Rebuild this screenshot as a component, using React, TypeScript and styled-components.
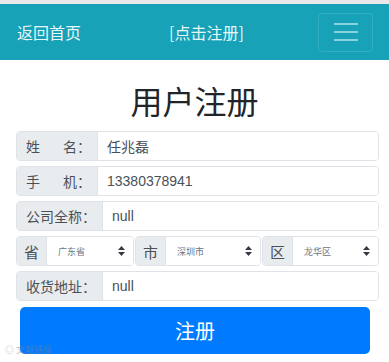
import styled, { createGlobalStyle } from "styled-components";

const GlobalStyle = createGlobalStyle`
  * { box-sizing: border-box; }
  body {
    margin: 0;
    background: #fff;
    font-family: "Liberation Sans", "Noto Sans CJK SC", sans-serif;
    color: #212529;
  }
`;

const Page = styled.div`
  position: relative;
  width: 389px;
  height: 362px;
  overflow: hidden;
`;

const StatusStrip = styled.div`
  height: 4px;
  background: #e9e9e9;
`;

const Navbar = styled.nav`
  height: 56px;
  background: #17a2b8;
  display: flex;
  align-items: center;
  padding: 0 16px 0 17px;
  font-size: 16px;
  font-family: "Noto Sans CJK SC", sans-serif;
  color: rgba(255, 255, 255, 0.92);
`;

const Brand = styled.a`
  color: inherit;
  text-decoration: none;
`;

const Hint = styled.span`
  margin-left: 88px;
  color: inherit;
`;

const Toggler = styled.button`
  margin-left: auto;
  width: 55px;
  height: 39px;
  border: 1px solid rgba(255, 255, 255, 0.12);
  border-radius: 4px;
  background: transparent;
  display: flex;
  align-items: center;
  justify-content: center;
  padding: 0;
`;

const Title = styled.h2`
  margin: 24px 0 9px;
  text-align: center;
  font-size: 32px;
  line-height: 38px;
  font-weight: 400;
  color: #212529;
`;

const Form = styled.form`
  padding: 0 10px 0 16px;
  display: flex;
  flex-direction: column;
  gap: 5px;
`;

const Group = styled.div<{ $grow?: number }>`
  display: flex;
  height: 30px;
  border: 1px solid #dfe2e6;
  border-radius: 4px;
  overflow: hidden;
  ${(p) => (p.$grow ? `flex: ${p.$grow} 1 0; min-width: 0;` : "")}
`;

const Addon = styled.span<{ $narrow?: boolean }>`
  display: flex;
  align-items: center;
  background: #e9ecef;
  color: #495057;
  font-size: ${(p) => (p.$narrow ? "15px" : "14px")};
  padding: ${(p) => (p.$narrow ? "0 7px" : "0 6px 0 9px")};
  border-right: 1px solid #dfe2e6;
  white-space: nowrap;
  font-family: "Noto Sans CJK SC", sans-serif;
`;

const Gap = styled.span`
  display: inline-block;
  width: 23px;
`;

const Field = styled.input`
  flex: 1;
  min-width: 0;
  border: 0;
  outline: none;
  padding: 0 9px;
  font-size: 14px;
  color: #495057;
  font-family: "Liberation Sans", "Noto Sans CJK SC", sans-serif;
  background: #fff;
`;

const Triple = styled.div`
  display: flex;
  gap: 1px;
`;

const Select = styled.div`
  flex: 1;
  display: flex;
  align-items: center;
  justify-content: space-between;
  padding: 0 8px 0 11px;
  font-size: 9px;
  color: #6c757d;
  font-family: "Noto Sans CJK SC", sans-serif;
  background: #fff;
`;

const Submit = styled.button`
  margin: 1px 9px 0 4px;
  height: 47px;
  border: 0;
  border-radius: 5px;
  background: #007bff;
  color: #fff;
  font-size: 20px;
  font-family: "Noto Sans CJK SC", sans-serif;
`;

const Watermark = styled.div`
  position: absolute;
  left: 5px;
  bottom: 6px;
  display: flex;
  align-items: center;
  gap: 2px;
  font-size: 9px;
  color: rgba(120, 130, 140, 0.55);
  font-family: "Noto Sans CJK SC", sans-serif;
`;

const Burger = () => (
  <svg width="26" height="20" viewBox="0 0 26 20">
    <g stroke="#8ad2de" strokeWidth="2">
      <line x1="1" y1="2" x2="25" y2="2" />
      <line x1="1" y1="10" x2="25" y2="10" />
      <line x1="1" y1="18" x2="25" y2="18" />
    </g>
  </svg>
);

const Arrows = () => (
  <svg width="7" height="10" viewBox="0 0 7 10">
    <path d="M3.5 0 L7 4 L0 4 Z M3.5 10 L0 6 L7 6 Z" fill="#343a40" />
  </svg>
);

const regions = [
  { label: "省", value: "广东省", grow: 118 },
  { label: "市", value: "深圳市", grow: 126 },
  { label: "区", value: "龙华区", grow: 117 },
];

export default function App() {
  return (
    <Page>
      <GlobalStyle />
      <StatusStrip />
      <Navbar>
        <Brand href="#">返回首页</Brand>
        <Hint>[点击注册]</Hint>
        <Toggler type="button">
          <Burger />
        </Toggler>
      </Navbar>
      <Title>用户注册</Title>
      <Form onSubmit={(e) => e.preventDefault()}>
        <Group>
          <Addon>
            姓<Gap />名：
          </Addon>
          <Field defaultValue="任兆磊" />
        </Group>
        <Group>
          <Addon>
            手<Gap />机：
          </Addon>
          <Field defaultValue="13380378941" />
        </Group>
        <Group>
          <Addon>公司全称：</Addon>
          <Field defaultValue="null" />
        </Group>
        <Triple>
          {regions.map((r) => (
            <Group $grow={r.grow} key={r.label}>
              <Addon $narrow>{r.label}</Addon>
              <Select>
                {r.value}
                <Arrows />
              </Select>
            </Group>
          ))}
        </Triple>
        <Group>
          <Addon>收货地址：</Addon>
          <Field defaultValue="null" />
        </Group>
        <Submit type="submit">注册</Submit>
      </Form>
      <Watermark>
        <span>◎</span>
        <span>文献链接</span>
      </Watermark>
    </Page>
  );
}
